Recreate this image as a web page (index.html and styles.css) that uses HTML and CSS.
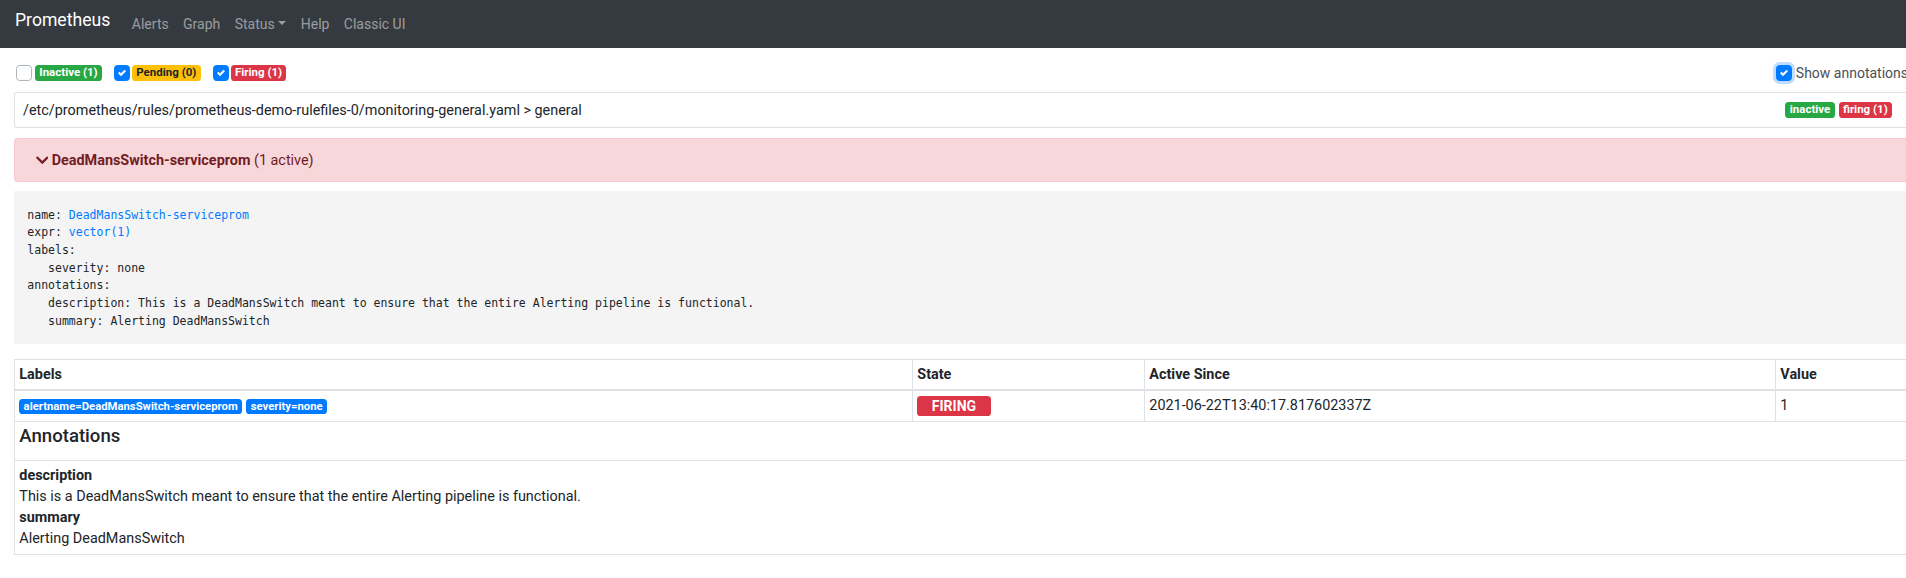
FILE: index.html
```html
<!DOCTYPE html>
<html lang="en">
<head>
<meta charset="utf-8">
<title>Prometheus Time Series Collection and Processing Server</title>
<link rel="stylesheet" href="styles.css">
</head>
<body>
<nav class="navbar">
  <span class="brand">Prometheus</span>
  <span class="nav-link">Alerts</span>
  <span class="nav-link">Graph</span>
  <span class="nav-link">Status<span class="caret"></span></span>
  <span class="nav-link">Help</span>
  <span class="nav-link">Classic UI</span>
</nav>

<main class="page">
  <div class="togglers">
    <label class="toggle toggle-first">
      <span class="check"></span>
      <span class="badge badge-success">Inactive (1)</span>
    </label>
    <label class="toggle">
      <span class="check on"><svg viewBox="0 0 8 8"><path fill="#fff" d="M6.564.75l-3.59 3.612-1.538-1.55L0 4.26l2.974 2.99L8 2.193z"/></svg></span>
      <span class="badge badge-warning">Pending (0)</span>
    </label>
    <label class="toggle">
      <span class="check on"><svg viewBox="0 0 8 8"><path fill="#fff" d="M6.564.75l-3.59 3.612-1.538-1.55L0 4.26l2.974 2.99L8 2.193z"/></svg></span>
      <span class="badge badge-danger">Firing (1)</span>
    </label>
    <label class="toggle toggle-right">
      <span class="check on focus"><svg viewBox="0 0 8 8"><path fill="#fff" d="M6.564.75l-3.59 3.612-1.538-1.55L0 4.26l2.974 2.99L8 2.193z"/></svg></span>
      <span class="toggle-label">Show annotations</span>
    </label>
  </div>

  <div class="group-head">
    <span class="group-path">/etc/prometheus/rules/prometheus-demo-rulefiles-0/monitoring-general.yaml &gt; general</span>
    <span class="group-badges">
      <span class="badge badge-success">inactive</span>
      <span class="badge badge-danger">firing (1)</span>
    </span>
  </div>

  <div class="alert-card">
    <svg class="chevron" viewBox="0 0 448 512"><path fill="currentColor" d="M207.029 381.476L12.686 187.132c-9.373-9.373-9.373-24.569 0-33.941l22.667-22.667c9.357-9.357 24.522-9.375 33.901-.04L224 284.505l154.745-154.021c9.379-9.335 24.544-9.317 33.901.04l22.667 22.667c9.373 9.373 9.373 24.569 0 33.941L240.971 381.476c-9.373 9.372-24.569 9.372-33.942 0z"/></svg>
    <strong class="alert-name">DeadMansSwitch-serviceprom</strong>&nbsp;<span>(1 active)</span>
  </div>

  <pre class="rule-def"><code>name: <span class="code-link">DeadMansSwitch-serviceprom</span>
expr: <span class="code-link">vector(1)</span>
labels:
   severity: none
annotations:
   description: This is a DeadMansSwitch meant to ensure that the entire Alerting pipeline is functional.
   summary: Alerting DeadMansSwitch</code></pre>

  <table class="alert-table">
    <colgroup>
      <col class="col-labels">
      <col class="col-state">
      <col class="col-since">
      <col class="col-value">
    </colgroup>
    <thead>
      <tr>
        <th>Labels</th>
        <th>State</th>
        <th>Active Since</th>
        <th>Value</th>
      </tr>
    </thead>
    <tbody>
      <tr>
        <td><span class="badge badge-primary label-badge">alertname=DeadMansSwitch-serviceprom</span><span class="badge badge-primary label-badge">severity=none</span></td>
        <td><span class="state-badge">FIRING</span></td>
        <td>2021-06-22T13:40:17.817602337Z</td>
        <td>1</td>
      </tr>
      <tr>
        <td colspan="4" class="anno-title-cell"><h5 class="anno-title">Annotations</h5></td>
      </tr>
      <tr>
        <td colspan="4">
          <div><strong>description</strong></div>
          <div>This is a DeadMansSwitch meant to ensure that the entire Alerting pipeline is functional.</div>
          <div><strong>summary</strong></div>
          <div>Alerting DeadMansSwitch</div>
        </td>
      </tr>
    </tbody>
  </table>
</main>
</body>
</html>
```

FILE: styles.css
```css
* { box-sizing: border-box; }

html, body { overflow-x: hidden; }

body {
  margin: 0;
  font-family: "Segoe UI", Roboto, "Helvetica Neue", Arial, sans-serif;
  font-size: 14.4px;
  line-height: 21px;
  color: #212529;
  background: #fff;
}

/* ---------- navbar ---------- */
.navbar {
  height: 48px;
  background: #343a40;
  display: flex;
  align-items: center;
  padding: 0 14px;
}
.brand {
  color: #fff;
  font-size: 17.6px;
  line-height: 27px;
  padding-bottom: 7px;
  margin-left: 1px;
  margin-right: 14.4px;
}
.nav-link {
  color: rgba(255, 255, 255, .5);
  font-size: 14px;
  padding: 1px 7.2px 0;
  line-height: 21.6px;
}
.caret {
  display: inline-block;
  margin-left: 3.7px;
  vertical-align: 3.7px;
  border-top: 4.3px solid;
  border-left: 4.3px solid transparent;
  border-right: 4.3px solid transparent;
}

/* ---------- page ---------- */
.page {
  width: 1938px;
  padding: 17px 14px 0;
}

.togglers {
  display: flex;
  align-items: center;
  height: 16px;
}
.toggle {
  display: flex;
  align-items: center;
  margin-right: 12px;
}
.toggle-first { margin-left: 2px; }
.toggle-first .check { margin-right: 3px; }
.toggle-right {
  margin-left: auto;
  margin-right: 16px;
}
.check {
  width: 16px;
  height: 16px;
  border-radius: 3.6px;
  border: 1px solid #adb5bd;
  background: #fff;
  margin-right: 2px;
  display: flex;
  align-items: center;
  justify-content: center;
  flex: none;
}
.check.on {
  background: #007bff;
  border-color: #007bff;
}
.check svg {
  width: 8px;
  height: 8px;
  display: block;
}
.check.focus {
  box-shadow: 0 0 0 2.9px rgba(0, 123, 255, .25);
}
.toggle-label {
  color: #495057;
  font-size: 14px;
  margin-left: 2px;
  white-space: nowrap;
}

.badge {
  display: inline-block;
  font-size: 11.5px;
  font-weight: 700;
  line-height: 1;
  padding: 2.2px 4.3px;
  border-radius: 3.6px;
  color: #fff;
  white-space: nowrap;
  vertical-align: middle;
}
.badge-success { background: #28a745; }
.badge-warning { background: #ffc107; color: #212529; }
.badge-danger { background: #dc3545; }
.badge-primary { background: #007bff; }

/* ---------- rule group header ---------- */
.group-head {
  margin-top: 11px;
  height: 36px;
  border: 1px solid #dee2e6;
  border-radius: 2px;
  display: flex;
  align-items: center;
  justify-content: space-between;
  padding: 0 31px 0 8px;
}
.group-badges {
  display: flex;
  gap: 4px;
}

/* ---------- alert card ---------- */
.alert-card {
  margin-top: 10px;
  height: 44px;
  background: #f8d7da;
  border: 1px solid #f5c6cb;
  border-radius: 3.6px;
  color: #721c24;
  display: flex;
  align-items: center;
  padding: 1px 0 0 20.8px;
}
.chevron {
  width: 12.6px;
  height: 14.4px;
  margin-right: 3.3px;
  flex: none;
}
.alert-name { font-weight: 700; }

/* ---------- rule definition ---------- */
.rule-def {
  margin: 9px 0 0;
  background: #f4f4f4;
  padding: 15.5px 13.3px 13.5px;
  font-family: "DejaVu Sans Mono", "Liberation Mono", monospace;
  font-size: 11.5px;
  line-height: 17.7px;
  color: #212529;
}
.code-link { color: #007bff; }

/* ---------- alerts table ---------- */
.alert-table {
  margin-top: 15px;
  width: 1910px;
  border-collapse: collapse;
  table-layout: fixed;
}
.col-labels { width: 898px; }
.col-state { width: 232px; }
.col-since { width: 631px; }
.col-value { width: 149px; }

.alert-table th,
.alert-table td {
  border: 1px solid #dee2e6;
  text-align: left;
  padding: 4.5px 4.3px;
  vertical-align: top;
}
.alert-table th {
  font-weight: 700;
  padding: 4px 4.3px;
  vertical-align: bottom;
  border-bottom-width: 2px;
}
.label-badge {
  font-size: 11.3px;
  margin-right: 4.5px;
  padding: 1.6px 4.3px;
}
.state-badge {
  display: inline-block;
  background: #dc3545;
  color: #fff;
  font-size: 14px;
  font-weight: 700;
  line-height: 14px;
  padding: 3px 14.5px;
  border-radius: 3.6px;
  vertical-align: middle;
  margin-top: -1px;
}
.anno-title-cell {
  padding: 4.3px 4.3px;
}
.anno-title {
  margin: 0 0 7.2px;
  font-size: 18.6px;
  font-weight: 500;
  line-height: 21.6px;
}
```
